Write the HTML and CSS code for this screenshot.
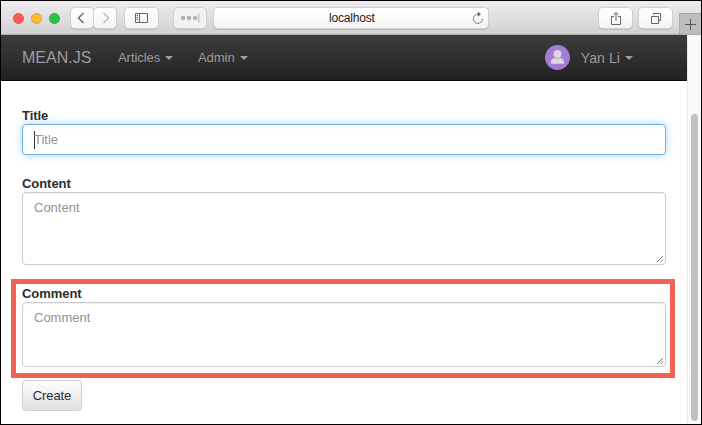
FILE: index.html
```html
<!DOCTYPE html>
<html lang="en">
<head>
<meta charset="utf-8">
<title>MEAN.JS</title>
<link rel="stylesheet" href="styles.css">
</head>
<body>
<div class="window">
  <header class="toolbar">
    <div class="lights"><i class="red"></i><i class="yellow"></i><i class="green"></i></div>
    <div class="history">
      <span class="tool"><svg width="22" height="20" fill="none" stroke="#666" stroke-width="1.4"><path d="M12.500 5 7.500 10l5 5"/></svg></span>
      <span class="tool"><svg width="22" height="20" fill="none" stroke="#b9b9b9" stroke-width="1.4"><path d="m9.500 5 5 5-5 5"/></svg></span>
    </div>
    <span class="tool sidebar"><svg width="15" height="12" fill="none" stroke="#666"><path d="M1.500 1.500h12v9h-12zM5.500 1.500v9M2.500 3.500h1.500M2.500 5.500h1.500M2.500 7.500h1.500"/></svg></span>
    <span class="tool dots"><svg width="20" height="10" fill="#b0b0b0"><circle cx="3" cy="5" r="2.200"/><circle cx="9" cy="5" r="2.200"/><circle cx="15" cy="5" r="2.200"/><path d="M18.300 .5h1v9h-1z"/></svg></span>
    <div class="address"><span>localhost</span>
      <svg width="12" height="14" fill="none" stroke="#777"><path d="M6.300 3.200A4.600 4.600 0 1 0 10.600 7.800"/><path d="m5.800 .5 3.200 2.700-3.200 2.500z" fill="#666" stroke="none"/></svg>
    </div>
    <span class="tool share"><svg width="12" height="15" fill="none" stroke="#666"><path d="M4 5.500H1.500v8h9v-8H8M6 10V1.500M3.500 4 6 1.400 8.500 4"/></svg></span>
    <span class="tool tabs"><svg width="12" height="12" fill="none" stroke="#666"><path d="M1.500 4.500h7v7h-7zM3.500 3V1.500h7v7H9"/></svg></span>
    <span class="newtab"><svg width="11" height="11" stroke="#555"><path d="M0 5.500h11M5.500 0v11"/></svg></span>
  </header>
  <div class="viewport">
    <div class="page">
      <nav class="navbar">
        <span class="brand">MEAN.JS</span>
        <span class="item articles">Articles<i class="caret"></i></span>
        <span class="item admin">Admin<i class="caret"></i></span>
        <span class="user"><svg width="25" height="25"><circle cx="12.500" cy="12.500" r="12.500" fill="#a47bd6"/><circle cx="12.500" cy="9" r="4" fill="#dcd7df"/><path d="M6 18.700v-2.200c0-2.200 2.500-3.500 4-3.500q2.500 1 5 0c1.500 0 4 1.300 4 3.500v2.200z" fill="#dcd7df"/></svg><span class="username">Yan Li</span><i class="caret"></i></span>
      </nav>
      <main class="form">
        <section class="field title">
          <div class="label">Title</div>
          <div class="control focused"><i class="cursor"></i>Title</div>
        </section>
        <section class="field content">
          <div class="label">Content</div>
          <div class="control area"><span>Content</span><svg class="grip" width="8" height="8" stroke="#777"><path d="M1 7 7 1M4.500 7 7 4.500"/></svg></div>
        </section>
        <section class="field highlight">
          <div class="label">Comment</div>
          <div class="control area"><span>Comment</span><svg class="grip" width="8" height="8" stroke="#777"><path d="M1 7 7 1M4.500 7 7 4.500"/></svg></div>
        </section>
        <div class="button">Create</div>
      </main>
    </div>
    <div class="scrollbar"><div class="thumb"></div></div>
  </div>
</div>
</body>
</html>
```
FILE: styles.css
```css
* { box-sizing: border-box; }
body { margin: 0; background: #fff; font-family: "Liberation Sans", Arial, sans-serif; font-size: 13px; color: #2c2c2c; }
svg { display: block; flex: none; }
.window { width: 702px; height: 425px; border: 1px solid #000; display: flex; flex-direction: column; overflow: hidden; }
.toolbar { height: 34px; flex: none; display: flex; align-items: flex-start; padding: 7px 0 0 12px; background: linear-gradient(#efedef, #d2d1d2); border-bottom: 1px solid #aaa; }
.lights { display: flex; gap: 7px; margin: 5px 11px 0 0; }
.lights i { width: 11px; height: 11px; border-radius: 50%; }
.red { background: #fc5b57; border: 1px solid #e5504b; }
.yellow { background: #fdbc2e; border: 1px solid #e2a431; }
.green { background: #29c740; border: 1px solid #28b03a; }
.history { display: flex; gap: 1px; margin-right: 9px; }
.tool { height: 20px; display: flex; align-items: center; justify-content: center; background: linear-gradient(#fff, #f4f4f4); border-radius: 4px; box-shadow: 0 0 0 1px #d0cfd0, 0 1px 0 1px #c2c1c2; }
.history .tool { width: 22px; }
.sidebar { width: 33px; margin-right: 16px; }
.dots { width: 32px; margin-right: 8px; background: #f3f2f3; }
.address { width: 274px; height: 20px; display: flex; align-items: center; background: linear-gradient(#fff, #f4f4f4); border-radius: 4px; box-shadow: 0 0 0 1px #d0cfd0, 0 1px 0 1px #b9b8b9; font-size: 12px; color: #222; }
.address span { width: 246px; padding-left: 115px; letter-spacing: -.2px; }
.address svg { margin-left: 12px; }
.share { width: 33px; margin-left: 111px; }
.tabs { width: 33px; margin-left: 7px; }
.newtab { width: 22px; height: 21px; margin: 5px 0 0 7px; display: flex; align-items: center; justify-content: center; background: #bebdbe; border: 1px solid #aaa; border-width: 1px 0 0 1px; }
.viewport { flex: 1; min-height: 0; display: flex; }
.page { width: 686px; }
.navbar { height: 46px; display: flex; align-items: center; padding-left: 21px; background: linear-gradient(#3c3c3c, #222); border-bottom: 1px solid #080808; color: #9d9d9d; }
.brand { width: 96px; font-size: 16px; }
.item { display: flex; align-items: center; letter-spacing: -.05px; }
.articles { width: 80px; }
.caret { border: 4px solid transparent; border-top-color: currentColor; border-bottom: 0; margin: 1px 0 0 5px; }
.user { display: flex; align-items: center; margin-left: auto; padding-right: 54px; }
.username { font-size: 14px; margin-left: 11px; letter-spacing: .1px; }
.form { padding: 26px 21px 0; }
.label { height: 17px; line-height: 17px; font-weight: bold; letter-spacing: -.05px; }
.control { width: 644px; height: 31px; border: 1px solid #ccc; border-radius: 4px; padding: 0 11px; color: #929292; box-shadow: inset 0 1px 1px rgba(0,0,0,.075); }
.focused { display: flex; align-items: center; border-color: #66afe9; box-shadow: 0 0 8px rgba(102,175,233,.55); }
.cursor { width: 1px; height: 18px; margin-right: -1px; background: #333; }
.area { height: 73px; padding: 7px 1px 1px 11px; display: flex; justify-content: space-between; }
.grip { align-self: flex-end; }
.title { height: 68px; }
.content { height: 104px; }
.highlight { width: 664px; height: 99px; margin-left: -11px; padding: 1px 6px 0 6px; border: 5px solid #f26357; }
.highlight .area { height: 65px; }
.button { width: 60px; height: 31px; margin-top: 2px; line-height: 29px; text-align: center; background: linear-gradient(#fff, #e0e0e0); border: 1px solid #ccc; border-radius: 4px; letter-spacing: -.1px; }
.scrollbar { width: 14px; padding: 79px 3px 3px; background: #fafafa; border-left: 1px solid #e8e8e8; }
.thumb { width: 7px; height: 307px; border-radius: 4px; background: #c1c1c1; }
```
